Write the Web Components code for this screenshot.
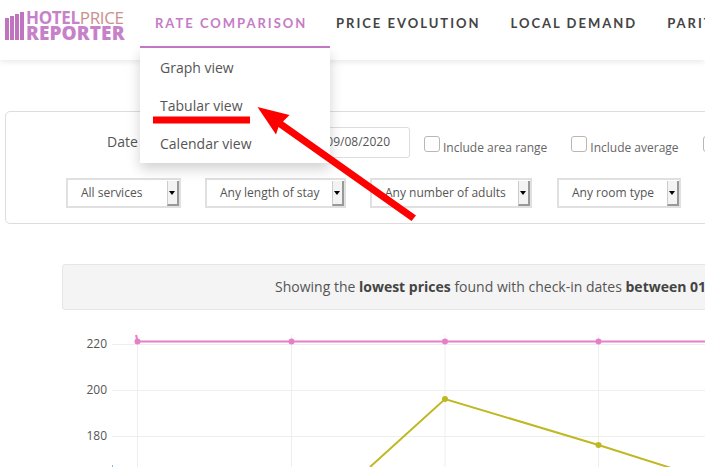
<!DOCTYPE html>
<html>
<head>
<meta charset="utf-8">
<title>Hotel Price Reporter</title>
<style>
  html, body { margin: 0; height: 100%; overflow: hidden; background: #fff; }
  body { font-family: "Open Sans", sans-serif; color: #555; position: relative; }
</style>
</head>
<body>
<template id="logo_template">
  <style>
    :host { display: flex; flex: none; gap: 2px; width: 125px; margin-left: 5px; opacity: .95; }
    .bars { display: flex; align-items: flex-end; gap: 1px; height: 28px; margin-top: 12px; }
    .bars i { display: block; width: 4px; background: #bd6dbd; }
    .words { display: flex; flex-direction: column; font-family: "Open Sans", sans-serif; color: #c57bc6; margin-top: 11px; }
    .top { font-size: 17px; line-height: 14px; font-weight: 700; letter-spacing: -.35px; white-space: nowrap; overflow: hidden; }
    .top span { font-weight: 400; color: #c98a8a; }
    .bottom { font-size: 19px; line-height: 14px; font-weight: 800; letter-spacing: .1px; white-space: nowrap; margin-top: 1px; overflow: hidden; }
  </style>
  <div class="bars"><i style="height:22px"></i><i style="height:24px"></i><i style="height:26px"></i><i style="height:28px"></i></div>
  <div class="words"><div class="top">HOTEL<span>PRICE</span></div><div class="bottom">REPORTER</div></div>
</template>

<template id="nav_template">
  <style>
    :host { display: block; flex: none; position: relative; height: 47px; padding: 0 15px; font: 700 13px/46px Lato, sans-serif; letter-spacing: 2px; color: #444; white-space: nowrap; }
    :host([active]) { width: 160px; margin-right: -9px; color: #c57bc6; border-bottom: 2px solid #c57bc6; height: 46px; }
  </style>
  <slot></slot>
</template>

<template id="menu_template">
  <style>
    :host { display: block; position: absolute; left: 0; top: 48px; width: 190px; height: 115px; background: #fff; box-shadow: 0 6px 12px rgba(0,0,0,.18); padding-top: 1px; box-sizing: border-box; z-index: 2; letter-spacing: 0; }
  </style>
  <slot></slot>
</template>

<template id="menu_item_template">
  <style>
    :host { display: block; height: 38px; padding-left: 20px; font: 400 14px/38px "Open Sans", sans-serif; color: #555; }
  </style>
  <slot></slot>
</template>

<template id="check_template">
  <style>
    :host { display: flex; align-items: flex-start; font: 400 12px/16px "Open Sans", sans-serif; color: #666; white-space: nowrap; }
    i { display: block; width: 14px; height: 14px; border: 1px solid #bbb6ae; border-radius: 3px; margin-right: 3px; margin-top: 9px; background: #fff; }
    span { margin-top: 13px; }
  </style>
  <i></i><span><slot></slot></span>
</template>

<template id="select_template">
  <style>
    :host { display: flex; box-sizing: border-box; height: 30px; border: 2px solid #e0e0e0; font: 400 12px/26px "Open Sans", sans-serif; color: #555; white-space: nowrap; background: #fff; }
    .text { flex: 1; padding-left: 13px; }
    .btn { width: 9px; background: #f3f3f3; border-left: 1px solid #ccc; border-right: 2px solid #999; border-bottom: 2px solid #999; position: relative; margin-top: 1px; }
    .btn::after { content: ""; position: absolute; left: 1px; top: 10px; border: 3.5px solid transparent; border-top: 4px solid #000; border-bottom: 0; }
  </style>
  <div class="text"><slot></slot></div><div class="btn"></div>
</template>

<template id="date_template">
  <style>
    :host { display: block; box-sizing: border-box; width: 210px; height: 31px; border: 1px solid #ddd; border-radius: 3px; font: 400 12px/28px "Open Sans", sans-serif; color: #555; text-align: right; padding-right: 19px; white-space: nowrap; background: #fff; }
  </style>
  <slot></slot>
</template>

<template id="panel_template">
  <style>
    :host { display: block; box-sizing: border-box; width: 800px; height: 113px; margin: 51px 0 0 5px; border: 1px solid #ddd; border-radius: 5px; }
    .row { display: flex; }
    .one { padding-top: 15px; height: 34px; }
    .two { padding-top: 17px; }
  </style>
  <div class="row one"><slot name="one"></slot></div>
  <div class="row two"><slot name="two"></slot></div>
</template>

<template id="notice_template">
  <style>
    :host { display: block; box-sizing: border-box; width: 800px; height: 46px; margin: 40px 0 0 62px; padding-left: 212px; background: #f4f4f4; border: 1px solid #e6e6e6; border-radius: 3px; font: 400 14px/44px "Open Sans", sans-serif; color: #555; white-space: nowrap; overflow: hidden; }
    ::slotted(b) { font-weight: 700; color: #444; }
  </style>
  <slot></slot>
</template>

<template id="chart_template">
  <style>
    :host { display: block; height: 157px; }
    svg { display: block; }
    text { font: 400 12px "Open Sans", sans-serif; fill: #555; }
    .grid { stroke: #eeeeee; stroke-width: 1; fill: none; }
    .pink { stroke: #e67fc6; stroke-width: 2; fill: none; }
    .olive { stroke: #bfb822; stroke-width: 2; fill: none; }
  </style>
  <svg width="705" height="157" viewBox="0 310 705 157">
    <path class="grid" d="M112 344.5H705M112 390.5H705M112 436.5H705M137.5 335V467M291.5 335V467M445 335V467M598.5 335V467"/>
    <path d="M112.5 465V467" stroke="#7cb5ec" fill="none"/>
    <text x="107" y="348" text-anchor="end">220</text>
    <text x="107" y="394" text-anchor="end">200</text>
    <text x="107" y="440" text-anchor="end">180</text>
    <path class="pink" d="M136 335L137.5 341.5H705"/>
    <g fill="#e67fc6"><circle cx="137.5" cy="341.5" r="3"/><circle cx="291.5" cy="341.5" r="3"/><circle cx="445" cy="341.5" r="3"/><circle cx="598.5" cy="341.5" r="3"/></g>
    <path class="olive" d="M370 467L445 399L598.5 445L671 468"/>
    <g fill="#bfb822"><circle cx="445" cy="399" r="3"/><circle cx="598.5" cy="445" r="3"/></g>
  </svg>
</template>

<template id="header_template">
  <style>
    :host { display: flex; height: 60px; background: #fff; box-shadow: 0 2px 6px rgba(0,0,0,.09); position: relative; z-index: 1; }
    nav { display: flex; margin-left: 10px; }
  </style>
  <slot name="logo"></slot>
  <nav><slot></slot></nav>
</template>

<template id="mark_template">
  <style>
    :host { display: block; position: absolute; left: 0; top: 0; width: 705px; height: 467px; pointer-events: none; z-index: 3; }
    svg { display: block; }
  </style>
  <svg width="705" height="467"><rect x="153" y="116.5" width="97" height="7" fill="#fe0000"/><path d="M257.5 107L289.5 115L283 121.5L416 215.5L411.5 221L278.5 127L276 134.5Z" fill="#fe0000"/></svg>
</template>

<hpr-header>
  <hpr-logo slot="logo"></hpr-logo>
  <hpr-nav active>RATE COMPARISON
    <hpr-menu>
      <hpr-menu-item>Graph view</hpr-menu-item>
      <hpr-menu-item>Tabular view</hpr-menu-item>
      <hpr-menu-item>Calendar view</hpr-menu-item>
    </hpr-menu>
  </hpr-nav>
  <hpr-nav>PRICE EVOLUTION</hpr-nav>
  <hpr-nav>LOCAL DEMAND</hpr-nav>
  <hpr-nav>PARITY</hpr-nav>
</hpr-header>

<hpr-panel>
  <span slot="one" style="font:400 14px/30px 'Open Sans',sans-serif;margin-left:101px;width:93px;color:#555">Date</span>
  <hpr-date slot="one">09/08/2020</hpr-date>
  <hpr-check slot="one" style="margin-left:14px">Include area range</hpr-check>
  <hpr-check slot="one" style="margin-left:24px">Include average</hpr-check>
  <hpr-check slot="one" style="margin-left:24px">Include</hpr-check>
  <hpr-select slot="two" style="margin-left:60px;width:115px">All services</hpr-select>
  <hpr-select slot="two" style="margin-left:24px;width:141px">Any length of stay</hpr-select>
  <hpr-select slot="two" style="margin-left:24px;width:162px">Any number of adults</hpr-select>
  <hpr-select slot="two" style="margin-left:25px;width:124px">Any room type</hpr-select>
</hpr-panel>

<hpr-notice>Showing the <b>lowest prices</b> found with check-in dates <b>between 01/08/2020 and 09/08/2020</b></hpr-notice>

<hpr-chart></hpr-chart>
<hpr-mark></hpr-mark>

<script>
  function define(name, templateId) {
    customElements.define(name, class extends HTMLElement {
      constructor() {
        super();
        let copy = document.getElementById(templateId).content.cloneNode(true);
        this.attachShadow({mode: 'open'}).appendChild(copy);
      }
    });
  }
  define('hpr-header', 'header_template');
  define('hpr-logo', 'logo_template');
  define('hpr-nav', 'nav_template');
  define('hpr-menu', 'menu_template');
  define('hpr-menu-item', 'menu_item_template');
  define('hpr-panel', 'panel_template');
  define('hpr-date', 'date_template');
  define('hpr-check', 'check_template');
  define('hpr-select', 'select_template');
  define('hpr-notice', 'notice_template');
  define('hpr-chart', 'chart_template');
  define('hpr-mark', 'mark_template');
</script>
</body>
</html>
